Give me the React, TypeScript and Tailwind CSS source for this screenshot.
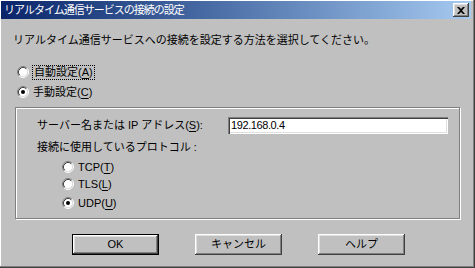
import React from "react";

function Radio({ checked }: { checked?: boolean }) {
  return (
    <svg width="12" height="12" viewBox="0 0 12 12" className="shrink-0">
      <circle cx="6" cy="6" r="4.5" fill="#fff" />
      <path d="M9.89 2.11A5.5 5.5 0 0 0 2.11 9.89" stroke="#808080" fill="none" />
      <path d="M2.11 9.89A5.5 5.5 0 0 0 9.89 2.11" stroke="#fff" fill="none" />
      <path d="M9.18 2.82A4.5 4.5 0 0 0 2.82 9.18" stroke="#404040" fill="none" />
      <path d="M2.82 9.18A4.5 4.5 0 0 0 9.18 2.82" stroke="#dfdfdf" fill="none" />
      {checked && <circle cx="6" cy="6" r="2" fill="#000" />}
    </svg>
  );
}

function Btn({ children, def }: { children: React.ReactNode; def?: boolean }) {
  return (
    <div
      className={
        "w-[87px] h-[21px] flex items-center justify-center text-[11px] text-black bg-[#c0c0c0] " +
        (def
          ? "border border-black shadow-[inset_-1px_-1px_#404040,inset_1px_1px_#fff,inset_-2px_-2px_#808080,inset_2px_2px_#dfdfdf]"
          : "shadow-[inset_-1px_-1px_#404040,inset_1px_1px_#fff,inset_-2px_-2px_#808080,inset_2px_2px_#dfdfdf]")
      }
    >
      {children}
    </div>
  );
}

export default function App() {
  return (
    <div className="w-[475px] h-[268px] bg-[#c0c0c0] flex flex-col shadow-[inset_-1px_-1px_#404040,inset_-2px_-2px_#808080,inset_1px_1px_#fff] font-['Liberation_Sans','Noto_Sans_CJK_JP',sans-serif] text-black overflow-hidden">
      {/* title bar */}
      <div className="ml-[1px] mt-[1px] mr-[4px] h-[18px] flex items-center justify-between bg-linear-to-r from-[#0a246a] to-[#a6caf0]">
        <span className="pl-[3px] text-white text-[11px] tracking-[-1px] leading-none">
          リアルタイム通信サービスの接続の設定
        </span>
        <div className="mr-[2px] w-[16px] h-[14px] bg-[#c0c0c0] flex items-center justify-center shadow-[inset_-1px_-1px_#404040,inset_1px_1px_#fff,inset_-2px_-2px_#808080,inset_2px_2px_#dfdfdf]">
          <svg width="8" height="7" viewBox="0 0 8 7">
            <path d="M0 0h2l2 2 2-2h2L5 3.5 8 7H6L4 5 2 7H0l3-3.5z" fill="#000" />
          </svg>
        </div>
      </div>

      {/* instruction */}
      <div className="mt-[13px] ml-[13px] h-[16px] flex items-center text-[11px] leading-none">
        リアルタイム通信サービスへの接続を設定する方法を選択してください。
      </div>

      {/* radio A */}
      <div className="mt-[16px] ml-[17px] h-[16px] flex items-center gap-[3px] text-[11px] leading-none">
        <Radio />
        <span className="border border-dotted border-black px-[1px] h-[15px] flex items-center">
          自動設定(<span className="underline underline-offset-2">A</span>)
        </span>
      </div>

      {/* radio C */}
      <div className="mt-[4px] ml-[17px] h-[16px] flex items-center gap-[4px] text-[11px] leading-none">
        <Radio checked />
        <span>
          手動設定(<span className="underline underline-offset-2">C</span>)
        </span>
      </div>

      {/* group box */}
      <div className="mt-[7px] ml-[15px] w-[445px] h-[112px] border border-[#808080] shadow-[inset_1px_1px_#fff,1px_1px_#fff] flex flex-col text-[11px] leading-none">
        <div className="mt-[9px] h-[17px] flex items-center">
          <span className="ml-[21px] w-[191px]">
            サーバー名または IP アドレス(<span className="underline underline-offset-2">S</span>):
          </span>
          <div className="w-[220px] h-[17px] bg-white flex items-center pl-[3px] tracking-[-0.4px] shadow-[inset_1px_1px_#808080,inset_2px_2px_#404040,inset_-1px_-1px_#fff,inset_-2px_-2px_#dfdfdf]">
            192.168.0.4
          </div>
        </div>
        <div className="mt-[5px] ml-[21px] h-[16px] flex items-center">
          接続に使用しているプロトコル :
        </div>
        <div className="mt-[4px] ml-[46px] h-[16px] flex items-center gap-[4px]">
          <Radio />
          <span>
            TCP(<span className="underline underline-offset-2">T</span>)
          </span>
        </div>
        <div className="mt-[1px] ml-[46px] h-[16px] flex items-center gap-[4px]">
          <Radio />
          <span>
            TLS(<span className="underline underline-offset-2">L</span>)
          </span>
        </div>
        <div className="mt-[3px] ml-[46px] h-[16px] flex items-center gap-[4px]">
          <Radio checked />
          <span>
            UDP(<span className="underline underline-offset-2">U</span>)
          </span>
        </div>
      </div>

      {/* buttons */}
      <div className="mt-[15px] ml-[72px] flex gap-[36px]">
        <Btn def>OK</Btn>
        <Btn>キャンセル</Btn>
        <Btn>ヘルプ</Btn>
      </div>
    </div>
  );
}
